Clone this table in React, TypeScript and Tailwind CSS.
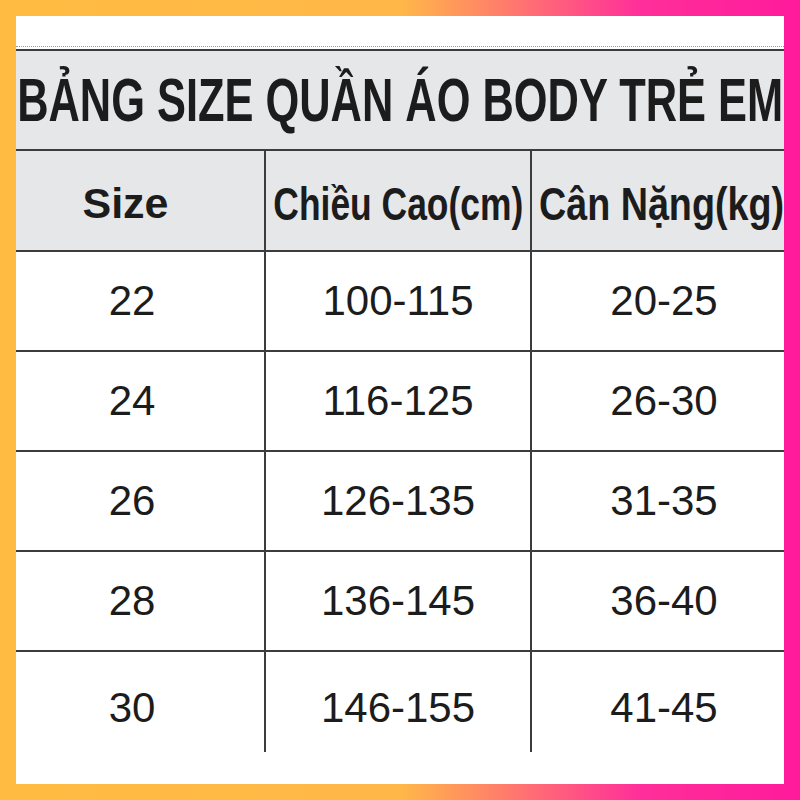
import React from 'react';

interface SizeRow {
  size: string;
  height: string;
  weight: string;
}

const rows: SizeRow[] = [
  { size: '22', height: '100-115', weight: '20-25' },
  { size: '24', height: '116-125', weight: '26-30' },
  { size: '26', height: '126-135', weight: '31-35' },
  { size: '28', height: '136-145', weight: '36-40' },
  { size: '30', height: '146-155', weight: '41-45' },
];

export default function App() {
  return (
    <div className="w-[800px] h-[800px] p-4 bg-[linear-gradient(to_right,#ffbb42_0%,#ffb848_50%,#ff2f9a_80%,#ff1a9c_100%)] font-['Liberation_Sans',Arial,sans-serif] text-[#1c1c1c]">
      <div className="w-full h-full bg-white flex flex-col overflow-hidden">
        {/* top strip */}
        <div className="h-[31px] shrink-0 border-b border-dotted border-[#9a9a9a]" />
        <div className="h-[2px] shrink-0" />

        {/* title */}
        <div className="h-[102px] shrink-0 bg-[#e6e7e9] border-y-2 border-[#3c3c3c] flex items-center justify-center">
          <span className="shrink-0 inline-block whitespace-nowrap text-[62px] font-bold leading-none scale-x-[0.7]">
            BẢNG SIZE QUẦN ÁO BODY TRẺ EM
          </span>
        </div>

        {/* header row */}
        <div className="h-[101px] shrink-0 grid grid-cols-[250px_266px_252px] bg-[#e6e7e9] border-b-2 border-[#3c3c3c]">
          <div className="min-w-0 border-r-2 border-[#3c3c3c] flex items-center justify-center pr-[29px] pt-[6px]">
            <span className="text-[43px] font-bold leading-none">Size</span>
          </div>
          <div className="min-w-0 border-r-2 border-[#3c3c3c] flex items-center justify-center pt-[6px]">
            <span className="shrink-0 inline-block whitespace-nowrap text-[46px] font-bold leading-none scale-x-[0.77]">
              Chiều Cao(cm)
            </span>
          </div>
          <div className="min-w-0 flex items-center justify-center pl-[6px] pt-[6px]">
            <span className="shrink-0 inline-block whitespace-nowrap text-[46px] font-bold leading-none scale-x-[0.82]">
              Cân Nặng(kg)
            </span>
          </div>
        </div>

        {/* data rows */}
        {rows.map((r, i) => {
          const last = i === rows.length - 1;
          return (
            <div
              key={r.size}
              className={
                last
                  ? 'h-[100px] shrink-0 grid grid-cols-[250px_266px_252px]'
                  : 'h-[100px] shrink-0 grid grid-cols-[250px_266px_252px] border-b-2 border-[#3c3c3c]'
              }
            >
              <div className={(last ? 'pt-[12px] ' : '') + 'border-r-2 border-[#3c3c3c] flex items-center justify-center pr-[16px] text-[42px] leading-none'}>
                {r.size}
              </div>
              <div className={(last ? 'pt-[12px] ' : '') + 'border-r-2 border-[#3c3c3c] flex items-center justify-center text-[42px] leading-none'}>
                {r.height}
              </div>
              <div className={(last ? 'pt-[12px] ' : '') + 'flex items-center justify-center pl-[12px] text-[42px] leading-none'}>
                {r.weight}
              </div>
            </div>
          );
        })}
      </div>
    </div>
  );
}
